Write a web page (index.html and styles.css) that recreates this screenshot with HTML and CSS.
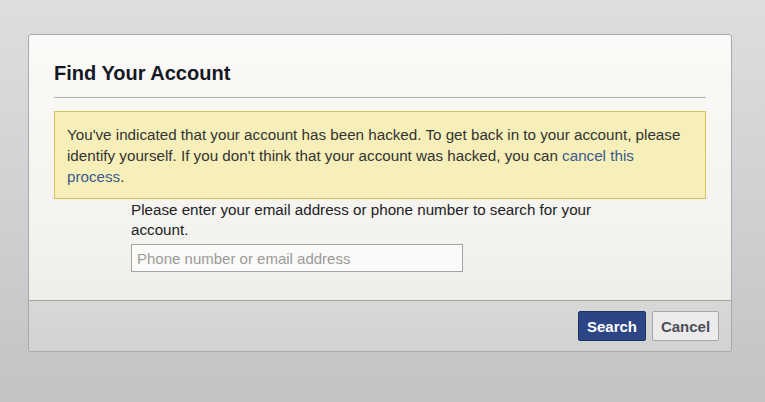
FILE: index.html
```html
<!DOCTYPE html>
<html>
<head>
<meta charset="utf-8">
<link rel="stylesheet" href="styles.css">
</head>
<body>
<div class="dialog">
  <div class="content">
    <h2 class="title">Find Your Account</h2>
    <div class="notice">You've indicated that your account has been hacked. To get back in to your account, please identify yourself. If you don't think that your account was hacked, you can <a class="link" href="#">cancel this process</a>.</div>
    <div class="form">
      <div class="prompt">Please enter your email address or phone number to search for your account.</div>
      <input class="field" type="text" placeholder="Phone number or email address">
    </div>
  </div>
  <div class="footer">
    <button class="btn primary">Search</button>
    <button class="btn secondary">Cancel</button>
  </div>
</div>
</body>
</html>
```
FILE: styles.css
```css
html, body {
  margin: 0;
  height: 100%;
}
body {
  background: linear-gradient(to bottom, #dddee0 0%, #d0d1d3 50%, #c2c3c5 100%);
  font-family: "Liberation Sans", Arial, sans-serif;
  padding: 34px 0 0 28px;
  box-sizing: border-box;
}
.dialog {
  width: 702px;
  border: 1px solid #a9a9a9;
  border-radius: 3px;
  overflow: hidden;
  background: linear-gradient(to bottom, #fbfaf8 0%, #f4f3f0 60%, #ebeae7 100%);
}
.content {
  padding: 26px 25px 28px 25px;
}
.title {
  margin: 0;
  font-size: 20px;
  line-height: 24px;
  font-weight: bold;
  color: #141823;
  padding-bottom: 12px;
  border-bottom: 1px solid #b2b2b2;
}
.notice {
  margin-top: 13px;
  background: #f7efb9;
  border: 1px solid #d4c356;
  padding: 12px 12px 11px 12px;
  font-size: 15.2px;
  line-height: 21px;
  color: #333333;
}
.link {
  color: #3b5a8e;
  text-decoration: none;
}
.form {
  padding-left: 77px;
  padding-top: 1px;
}
.prompt {
  width: 480px;
  font-size: 15.2px;
  line-height: 20px;
  color: #222222;
}
.field {
  display: block;
  margin-top: 4px;
  width: 332px;
  height: 28px;
  box-sizing: border-box;
  border: 1px solid #a3a3a3;
  background: #fafaf8;
  padding: 0 5px;
  font-family: "Liberation Sans", Arial, sans-serif;
  font-size: 15px;
  color: #333;
}
.field::placeholder {
  color: #9a9a9a;
}
.footer {
  border-top: 1px solid #a6a6a6;
  background: linear-gradient(to bottom, #d8d8d7, #d2d2d1);
  padding: 10px 12px 10px 0;
  display: flex;
  justify-content: flex-end;
  gap: 6px;
}
.btn {
  height: 30px;
  box-sizing: border-box;
  border-radius: 2px;
  font-family: "Liberation Sans", Arial, sans-serif;
  font-size: 15px;
  font-weight: bold;
  padding: 0;
}
.primary {
  width: 68px;
  background: #2c4585;
  border: 1px solid #1f3468;
  color: #ffffff;
}
.secondary {
  width: 67px;
  background: #ebebeb;
  border: 1px solid #a8a8a8;
  color: #4b4f56;
}
```
